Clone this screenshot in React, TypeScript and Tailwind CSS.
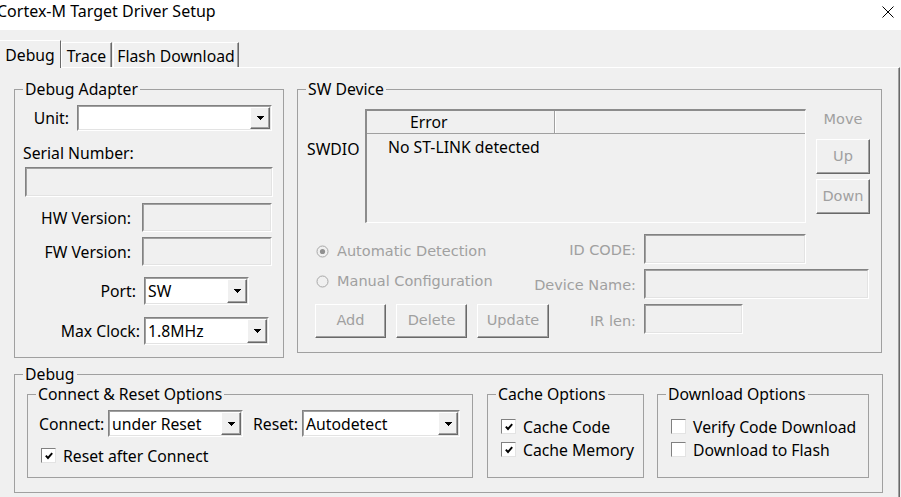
import React from "react";

const DIS = "font-['DejaVu_Sans',sans-serif] text-[14.5px] text-[#a0a0a0]";

function Tri() {
  return (
    <svg width="7" height="4" viewBox="0 0 7 4" shapeRendering="crispEdges">
      <polygon points="0,0 7,0 3.5,4" fill="#000" />
    </svg>
  );
}

function Combo({ cls, value }: { cls: string; value?: string }) {
  return (
    <div className={`${cls} shrink-0 border border-t-[#828282] border-l-[#828282] border-r-white border-b-white`}>
      <div className="flex h-full border border-t-[#a0a0a0] border-l-[#a0a0a0] border-r-[#e3e3e3] border-b-[#e3e3e3] bg-white">
        <div className="flex-1 pl-[2px] flex items-center whitespace-nowrap overflow-hidden leading-[20px]">{value}</div>
        <div className="w-[20px] h-full flex items-center justify-center bg-[#f0f0f0] border border-t-white border-l-white border-r-[#696969] border-b-[#696969] shadow-[inset_-1px_-1px_0_#a0a0a0]">
          <Tri />
        </div>
      </div>
    </div>
  );
}

function Field({ cls }: { cls: string }) {
  return (
    <div className={`${cls} shrink-0 border border-t-[#828282] border-l-[#828282] border-r-white border-b-white`}>
      <div className="h-full border border-t-[#a0a0a0] border-l-[#a0a0a0] border-r-[#e3e3e3] border-b-[#e3e3e3] bg-[#f0f0f0]" />
    </div>
  );
}

function Btn({ cls, children }: { cls: string; children: React.ReactNode }) {
  return (
    <div className={`${cls} shrink-0 flex items-center justify-center border border-t-white border-l-white border-r-[#696969] border-b-[#696969] shadow-[inset_-1px_-1px_0_#a0a0a0] ${DIS}`}>
      {children}
    </div>
  );
}

function Check({ checked }: { checked?: boolean }) {
  return (
    <div className="w-[15px] h-[15px] shrink-0 bg-white border border-t-[#808080] border-l-[#808080] border-r-[#e3e3e3] border-b-[#e3e3e3] flex items-center justify-center">
      {checked && (
        <svg width="8" height="8" viewBox="0 0 8 8">
          <polyline points="0.8,3.6 3,6 7.2,1.2" fill="none" stroke="#000" strokeWidth="1.9" />
        </svg>
      )}
    </div>
  );
}

function Radio({ on }: { on?: boolean }) {
  return (
    <svg width="13" height="13" viewBox="0 0 13 13" className="shrink-0">
      <circle cx="6.5" cy="6.5" r="5.5" fill="#f0f0f0" stroke="#a8a8a8" />
      {on && <circle cx="6.5" cy="6.5" r="2.6" fill="#909090" />}
    </svg>
  );
}

function Group({ title, cls, children }: { title: string; cls: string; children?: React.ReactNode }) {
  return (
    <div className={`relative shrink-0 border border-[#a0a0a0] ${cls}`}>
      <span className="absolute left-[8px] top-[-11px] px-[2px] bg-[#f0f0f0] leading-[20px] whitespace-nowrap">{title}</span>
      {children}
    </div>
  );
}

export default function App() {
  return (
    <div className="w-[901px] h-[497px] overflow-hidden bg-[#f0f0f0] text-black text-[15.75px] font-['Noto_Sans',sans-serif]">
      {/* title bar */}
      <div className="h-[30px] bg-white flex items-start justify-between">
        <div className="ml-[-3px] mt-[1px] leading-[20px] text-[16px] whitespace-nowrap">Cortex-M Target Driver Setup</div>
        <svg width="12" height="12" viewBox="0 0 12 12" className="mt-[6px] mr-[7px]">
          <path d="M0.5 0.5 L11.5 11.5 M11.5 0.5 L0.5 11.5" stroke="#000" strokeWidth="1" />
        </svg>
      </div>

      {/* tabs */}
      <div className="h-[37px] flex items-end">
        <div className="relative z-10 ml-[-1px] w-[62px] h-[28px] -mb-[1px] bg-[#f0f0f0] border-t border-l border-r border-t-white border-l-white border-r-[#696969] flex justify-center pt-[4px] leading-[20px]">
          Debug
        </div>
        <div className="w-[51px] h-[25px] border-t border-l border-r border-t-white border-l-white border-r-[#696969] shadow-[inset_-1px_0_0_#a0a0a0] flex justify-center pt-[3px] leading-[20px]">
          Trace
        </div>
        <div className="ml-[1px] w-[126px] h-[25px] border-t border-l border-r border-t-white border-l-white border-r-[#696969] shadow-[inset_-1px_0_0_#a0a0a0] flex justify-center pt-[3px] leading-[20px] whitespace-nowrap">
          Flash Download
        </div>
      </div>

      {/* panel */}
      <div className="w-[900px] h-[440px] border-t border-r border-t-white border-r-[#696969] shadow-[inset_-1px_0_0_#a0a0a0] pl-[14px]">
        <div className="flex items-start mt-[21px]">
          {/* Debug Adapter */}
          <Group title="Debug Adapter" cls="w-[270px] h-[269px]">
            <div className="flex flex-col">
              <div className="mt-[15px] h-[26px] flex items-center">
                <div className="w-[54px] text-right leading-[20px]">Unit:</div>
                <Combo cls="ml-[8px] w-[195px] h-[26px]" />
              </div>
              <div className="mt-[12px] pl-[8px] leading-[20px]">Serial Number:</div>
              <Field cls="mt-[4px] ml-[10px] w-[248px] h-[30px]" />
              <div className="mt-[6px] h-[29px] flex items-center">
                <div className="w-[116px] text-right leading-[20px] whitespace-nowrap">HW Version:</div>
                <Field cls="ml-[11px] w-[130px] h-[29px]" />
              </div>
              <div className="mt-[5px] h-[29px] flex items-center">
                <div className="w-[116px] text-right leading-[20px] whitespace-nowrap">FW Version:</div>
                <Field cls="ml-[11px] w-[130px] h-[29px]" />
              </div>
              <div className="mt-[11px] h-[28px] flex items-center">
                <div className="w-[121px] text-right leading-[20px]">Port:</div>
                <Combo cls="ml-[8px] w-[105px] h-[28px]" value="SW" />
              </div>
              <div className="mt-[12px] h-[28px] flex items-center">
                <div className="w-[125px] text-right leading-[20px] whitespace-nowrap">Max Clock:</div>
                <Combo cls="ml-[4px] w-[125px] h-[28px]" value="1.8MHz" />
              </div>
            </div>
          </Group>

          {/* SW Device */}
          <Group title="SW Device" cls="ml-[13px] w-[585px] h-[264px]">
            <div className="flex items-start mt-[19px]">
              <div className="w-[67px] pl-[9px] mt-[30px] leading-[20px]">SWDIO</div>
              <div className="w-[441px] h-[114px] shrink-0 border-t-2 border-l-2 border-r border-b border-t-[#8c8c8c] border-l-[#8c8c8c] border-r-white border-b-white flex flex-col">
                <div className="h-[23px] flex border-b border-b-[#a0a0a0]">
                  <div className="w-[188px] border-r border-r-[#a0a0a0] pl-[43px] leading-[22px]">Error</div>
                  <div className="w-px bg-white" />
                </div>
                <div className="pl-[21px] mt-[3px] leading-[20px] whitespace-nowrap">No ST-LINK detected</div>
              </div>
              <div className="ml-[10px] w-[54px] flex flex-col items-center">
                <div className={`leading-[20px] ${DIS}`}>Move</div>
                <Btn cls="mt-[10px] w-[54px] h-[35px]">Up</Btn>
                <Btn cls="mt-[5px] w-[54px] h-[35px]">Down</Btn>
              </div>
            </div>

            <div className="mt-[11px] pl-[17px] flex items-start">
              <div className="w-[321px] flex items-start">
                <div className="ml-[1px] mt-[7px] h-[20px] flex items-center gap-[8px]">
                  <Radio on />
                  <span className={`leading-[20px] whitespace-nowrap ${DIS}`}>Automatic Detection</span>
                </div>
                <div className={`ml-auto mt-[6px] leading-[20px] whitespace-nowrap ${DIS}`}>ID CODE:</div>
              </div>
              <Field cls="ml-[8px] w-[162px] h-[30px]" />
            </div>

            <div className="mt-[5px] pl-[17px] flex items-start">
              <div className="w-[321px] flex items-start">
                <div className="ml-[1px] mt-[2px] h-[20px] flex items-center gap-[8px]">
                  <Radio />
                  <span className={`leading-[20px] whitespace-nowrap ${DIS}`}>Manual Configuration</span>
                </div>
                <div className={`ml-auto mt-[6px] leading-[20px] whitespace-nowrap ${DIS}`}>Device Name:</div>
              </div>
              <Field cls="ml-[8px] w-[225px] h-[30px]" />
            </div>

            <div className="mt-[5px] pl-[17px] flex items-start">
              <div className="w-[321px] flex items-start">
                <div className="flex gap-[10px]">
                  <Btn cls="w-[71px] h-[34px]">Add</Btn>
                  <Btn cls="w-[71px] h-[34px]">Delete</Btn>
                  <Btn cls="w-[72px] h-[34px]">Update</Btn>
                </div>
                <div className={`ml-auto mt-[7px] leading-[20px] whitespace-nowrap ${DIS}`}>IR len:</div>
              </div>
              <Field cls="ml-[8px] w-[99px] h-[30px]" />
            </div>
          </Group>
        </div>

        {/* Debug bottom */}
        <Group title="Debug" cls="mt-[16px] w-[869px] h-[119px]">
          <div className="flex items-start mt-[19px] ml-[12px]">
            <Group title="Connect & Reset Options" cls="w-[446px] h-[84px]">
              <div className="mt-[15px] h-[27px] flex items-center">
                <div className="w-[80px] pl-[11px] leading-[20px]">Connect:</div>
                <Combo cls="w-[135px] h-[27px]" value="under Reset" />
                <div className="ml-[10px] w-[49px] leading-[20px]">Reset:</div>
                <Combo cls="w-[158px] h-[27px]" value="Autodetect" />
              </div>
              <div className="mt-[11px] pl-[13px] h-[15px] flex items-center">
                <Check checked />
                <span className="ml-[7px] leading-[20px] whitespace-nowrap">Reset after Connect</span>
              </div>
            </Group>

            <Group title="Cache Options" cls="ml-[14px] w-[157px] h-[84px]">
              <div className="mt-[24px] pl-[13px] h-[15px] flex items-center">
                <Check checked />
                <span className="ml-[7px] leading-[20px] whitespace-nowrap">Cache Code</span>
              </div>
              <div className="mt-[8px] pl-[13px] h-[15px] flex items-center">
                <Check checked />
                <span className="ml-[7px] leading-[20px] whitespace-nowrap">Cache Memory</span>
              </div>
            </Group>

            <Group title="Download Options" cls="ml-[13px] w-[212px] h-[84px]">
              <div className="mt-[24px] pl-[13px] h-[15px] flex items-center">
                <Check />
                <span className="ml-[7px] leading-[20px] whitespace-nowrap">Verify Code Download</span>
              </div>
              <div className="mt-[8px] pl-[13px] h-[15px] flex items-center">
                <Check />
                <span className="ml-[7px] leading-[20px] whitespace-nowrap">Download to Flash</span>
              </div>
            </Group>
          </div>
        </Group>
      </div>
    </div>
  );
}
